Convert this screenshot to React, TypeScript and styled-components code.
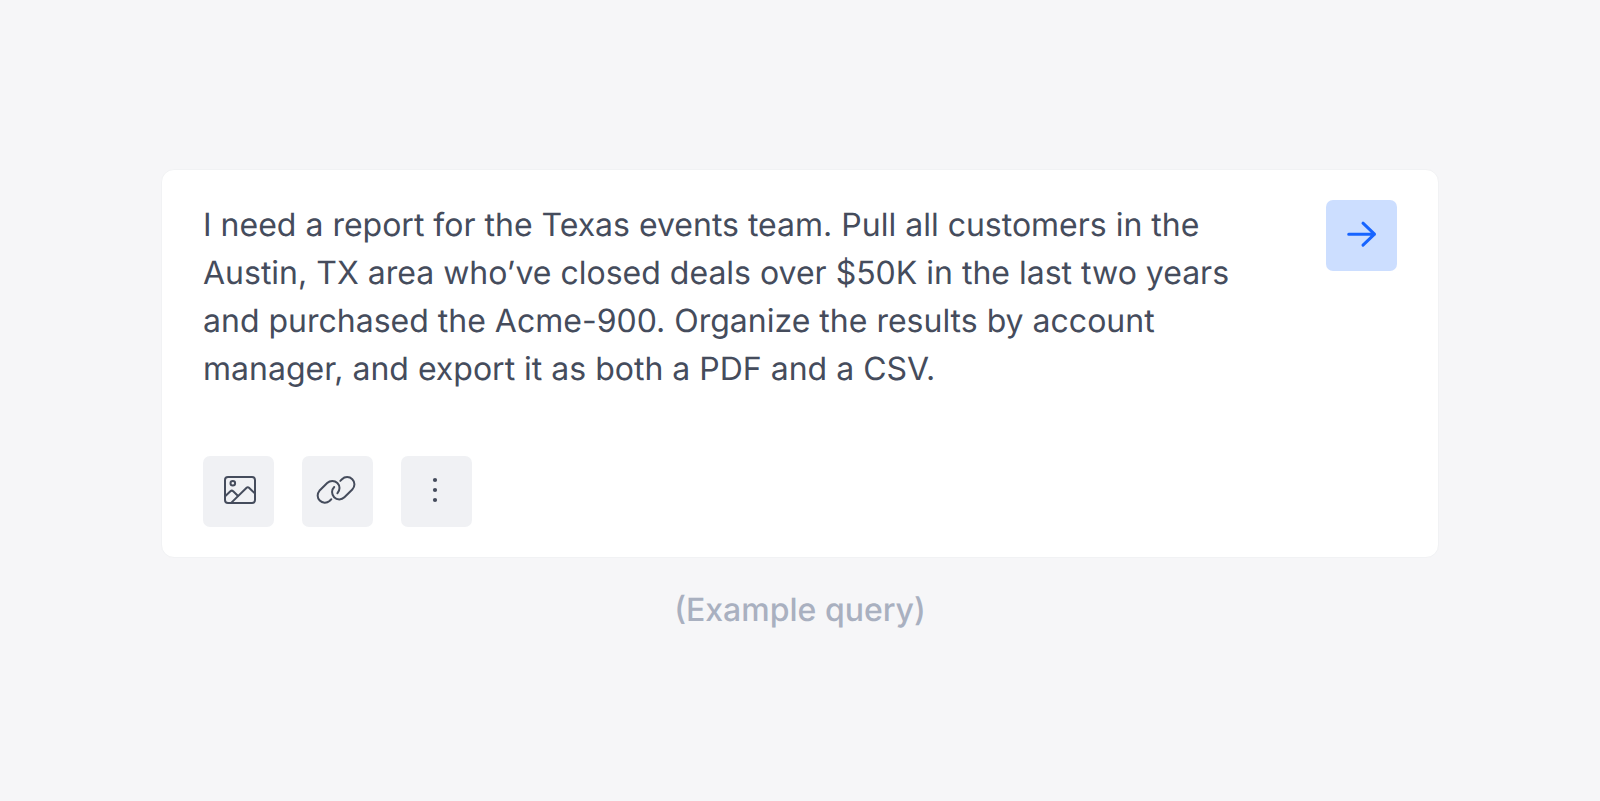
import React from "react";
import styled, { createGlobalStyle } from "styled-components";

const GlobalStyle = createGlobalStyle`
  *, *::before, *::after { box-sizing: border-box; }
  body {
    margin: 0;
    background: #f6f6f8;
    font-family: Inter, "Liberation Sans", sans-serif;
    text-rendering: geometricPrecision;
  }
`;

const Page = styled.main`
  min-height: 100vh;
  padding: 169px 161px 40px;
  display: flex;
  flex-direction: column;
  gap: 28px;
`;

const Card = styled.form`
  display: flex;
  flex-direction: column;
  gap: 59px;
  padding: 30px 41px;
  background: #ffffff;
  border: 1px solid #f1f2f4;
  border-radius: 13px;
`;

const QueryRow = styled.div`
  display: flex;
  align-items: flex-start;
  justify-content: space-between;
  gap: 80px;
`;

const QueryInput = styled.textarea`
  flex: 1;
  min-width: 0;
  height: 197px;
  padding: 1px 0 0;
  border: 0;
  outline: 0;
  resize: none;
  overflow: hidden;
  background: transparent;
  color: #454c5c;
  font-family: inherit;
  font-size: 32px;
  font-weight: 400;
  line-height: 48px;
  text-rendering: inherit;
`;

const Toolbar = styled.div`
  display: flex;
  gap: 28px;
`;

const IconButton = styled.button<{ $primary?: boolean }>`
  flex: none;
  width: 71px;
  height: 71px;
  padding: 0;
  border: 0;
  border-radius: 7px;
  cursor: pointer;
  background: ${(p) => (p.$primary ? "#ccdeff" : "#f0f1f4")};
  color: ${(p) => (p.$primary ? "#1764ff" : "#454c5c")};
`;

const Glyph = styled.svg`
  display: block;
  width: 100%;
  height: 100%;
  fill: none;
  stroke: currentColor;
  stroke-linecap: round;
  stroke-linejoin: round;
`;

const Caption = styled.p`
  margin: 0;
  color: #a9b0c0;
  font-size: 32px;
  font-weight: 500;
  line-height: 48px;
  text-align: center;
`;

const ArrowIcon = () => (
  <Glyph viewBox="0 0 71 71" strokeWidth="3" aria-hidden="true">
    <path d="M22.7 34.2H48.5M37 23.2L48.5 34.2L37 45.2" />
  </Glyph>
);

const ImageIcon = () => (
  <Glyph viewBox="0 0 71 71" strokeWidth="2" aria-hidden="true">
    <rect x="22" y="21.1" width="30" height="25.9" rx="3" />
    <circle cx="29.8" cy="27.2" r="2.3" />
    <path d="M22.4 40L27.4 35.2Q28.8 34 30.2 35.2L34.8 39.8" />
    <path d="M28.4 46.6L43.6 31.8Q44.8 30.6 46 31.8L51.8 37.4" />
  </Glyph>
);

const LinkIcon = () => (
  <Glyph viewBox="0 0 71 71" strokeWidth="2" aria-hidden="true">
    <path d="M29.3 43.2L27.5 45A7.2 7.2 0 0 1 17.4 34.8L25.2 27A7.2 7.2 0 0 1 35.4 37.2" />
    <path d="M38.3 24.9L40 23.2A7.2 7.2 0 0 1 50.3 33.5L42.4 41.3A7.2 7.2 0 0 1 32.2 31" />
  </Glyph>
);

const MoreIcon = () => (
  <Glyph viewBox="0 0 71 71" aria-hidden="true">
    <g fill="currentColor" stroke="none">
      <circle cx="34" cy="24" r="2.1" />
      <circle cx="34" cy="34" r="2.1" />
      <circle cx="34" cy="44" r="2.1" />
    </g>
  </Glyph>
);

const QUERY =
  "I need a report for the Texas events team. Pull all customers in the Austin, TX area who’ve closed deals over $50K in the last two years and purchased the Acme-900. Organize the results by account manager, and export it as both a PDF and a CSV.";

export default function App() {
  return (
    <>
      <GlobalStyle />
      <Page>
        <Card onSubmit={(e) => e.preventDefault()}>
          <QueryRow>
            <QueryInput aria-label="Query" defaultValue={QUERY} spellCheck={false} />
            <IconButton $primary type="submit" aria-label="Send">
              <ArrowIcon />
            </IconButton>
          </QueryRow>
          <Toolbar>
            <IconButton type="button" aria-label="Add image">
              <ImageIcon />
            </IconButton>
            <IconButton type="button" aria-label="Add link">
              <LinkIcon />
            </IconButton>
            <IconButton type="button" aria-label="More options">
              <MoreIcon />
            </IconButton>
          </Toolbar>
        </Card>
        <Caption>(Example query)</Caption>
      </Page>
    </>
  );
}
